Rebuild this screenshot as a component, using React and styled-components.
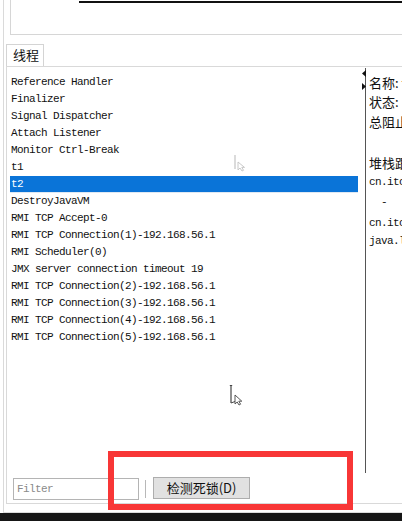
import React from "react";
import styled, { createGlobalStyle } from "styled-components";

const GlobalStyle = createGlobalStyle`
  html, body { margin: 0; padding: 0; background: #ffffff; overflow: hidden; }
  #root { width: 402px; height: 521px; }
`;

const MONO = `"Liberation Mono", "Noto Sans CJK SC", monospace`;
const CJK = `"Noto Sans CJK SC", "Liberation Sans", sans-serif`;

const Frame = styled.div`
  position: relative;
  width: 402px;
  height: 521px;
  display: flex;
  flex-direction: column;
  overflow: hidden;
  background: #ffffff;
`;

const Main = styled.div`
  flex: 0 0 513px;
  margin-left: 3px;
  border-left: 1px solid #dadada;
  border-bottom: 1px solid #dcdcdc;
  box-sizing: border-box;
  display: flex;
  flex-direction: column;
  overflow: hidden;
`;

const TopBox = styled.div`
  flex: 0 0 35px;
  margin-left: 6px;
  border-left: 1px solid #d6d6d6;
  border-bottom: 1px solid #d6d6d6;
  box-sizing: border-box;
  padding-top: 1px;
  display: flex;
`;

const TopRule = styled.div`
  margin-left: 68px;
  flex: 1;
  height: 2px;
  background: #111;
`;

const TabStrip = styled.div`
  margin-top: 9px;
  display: flex;
  padding-left: 2px;
  height: 22px;
`;

const Tab = styled.div`
  width: 38px;
  box-sizing: border-box;
  border: 1px solid #d4d4d4;
  border-bottom: none;
  background: #fff;
  font-family: ${CJK};
  font-size: 13px;
  line-height: 20px;
  padding-left: 6px;
  color: #111;
`;

const Panel = styled.div`
  margin-left: 2px;
  width: 420px;
  flex: 0 0 438px;
  box-sizing: border-box;
  border: 1px solid #d9d9d9;
  display: flex;
  flex-direction: column;
`;

const Split = styled.div`
  display: flex;
  flex: 0 0 406px;
`;

const ListPane = styled.div`
  flex: 0 0 351px;
  padding: 7px 0 0 3px;
  box-sizing: border-box;
  display: flex;
  flex-direction: column;
`;

const Row = styled.div`
  height: 17px;
  line-height: 17px;
  padding-left: 1px;
  font-family: ${MONO};
  font-size: 11px;
  letter-spacing: -0.6px;
  white-space: nowrap;
  color: ${(p) => (p.$selected ? "#ffffff" : "#111")};
  background: ${(p) => (p.$selected ? "#0a74d8" : "transparent")};
  border-bottom: ${(p) => (p.$selected ? "1px solid #dfe8f2" : "none")};
  box-sizing: border-box;
`;

const Splitter = styled.div`
  position: relative;
  flex: 0 0 8px;
  display: flex;
  justify-content: flex-end;
`;

const SplitLine = styled.div`
  width: 1px;
  margin-top: 1px;
  background: #555;
`;

const Arrow = styled.svg`
  position: absolute;
  left: 4px;
  top: ${(p) => p.$top}px;
`;

const InfoPane = styled.div`
  flex: 1;
  min-width: 0;
  padding: 6px 0 0 3px;
  display: flex;
  flex-direction: column;
  white-space: pre;
  color: #111;
  overflow: hidden;
`;

const InfoLine = styled.div`
  font-family: ${(p) => (p.$mono ? MONO : CJK)};
  font-size: ${(p) => (p.$mono ? "11px" : "13px")};
  letter-spacing: ${(p) => (p.$mono ? "-0.6px" : "0")};
  height: ${(p) => p.$h}px;
  line-height: ${(p) => p.$h}px;
`;

const BottomBar = styled.div`
  display: flex;
  align-items: center;
  padding-left: 6px;
  margin-top: 4px;
  height: 23px;
`;

const FilterBox = styled.div`
  width: 126px;
  height: 22px;
  box-sizing: border-box;
  border: 1px solid #b4b4b4;
  background: #fff;
  font-family: ${MONO};
  font-size: 11px;
  letter-spacing: -0.6px;
  color: #8a8a8a;
  line-height: 20px;
  padding-left: 3px;
`;

const Sep = styled.div`
  width: 1px;
  height: 18px;
  background: #b8b8b8;
  margin: 0 7px 0 6px;
`;

const DetectButton = styled.div`
  width: 97px;
  height: 22px;
  box-sizing: border-box;
  border: 1px solid #adadad;
  background: #e1e1e1;
  font-family: ${CJK};
  font-size: 13px;
  line-height: 20px;
  text-align: center;
  color: #111;
  margin-top: -2px;
`;

const BlackBar = styled.div`
  flex: 1;
  background: #161616;
`;

const RedBox = styled.div`
  position: absolute;
  left: 108px;
  top: 451px;
  width: 245px;
  height: 59px;
  box-sizing: border-box;
  border: 6px solid #f83636;
  pointer-events: none;
`;

const Cursor = styled.svg`
  position: absolute;
  left: ${(p) => p.$x}px;
  top: ${(p) => p.$y}px;
  opacity: ${(p) => p.$o};
`;

const threads = [
  "Reference Handler",
  "Finalizer",
  "Signal Dispatcher",
  "Attach Listener",
  "Monitor Ctrl-Break",
  "t1",
  "t2",
  "DestroyJavaVM",
  "RMI TCP Accept-0",
  "RMI TCP Connection(1)-192.168.56.1",
  "RMI Scheduler(0)",
  "JMX server connection timeout 19",
  "RMI TCP Connection(2)-192.168.56.1",
  "RMI TCP Connection(3)-192.168.56.1",
  "RMI TCP Connection(4)-192.168.56.1",
  "RMI TCP Connection(5)-192.168.56.1",
];

const info = [
  { t: "名称: t2", h: 19 },
  { t: "状态: BLOCKED", h: 20 },
  { t: "总阻止数: 1, 总等待数: 0", h: 20 },
  { t: " ", h: 20 },
  { t: "堆栈跟踪:", h: 21 },
  { t: "cn.itcast.DeadLock.run", h: 18, mono: true },
  { t: "  -      已锁定", h: 23, mono: true },
  { t: "cn.itcast.DeadLock.run", h: 18, mono: true },
  { t: "java.lang.Thread.run", h: 19, mono: true },
];

export default function App() {
  return (
    <Frame>
      <GlobalStyle />
      <Main>
        <TopBox>
          <TopRule />
        </TopBox>
        <TabStrip>
          <Tab>线程</Tab>
        </TabStrip>
        <Panel>
          <Split>
            <ListPane>
              {threads.map((t) => (
                <Row key={t} $selected={t === "t2"}>
                  {t}
                </Row>
              ))}
            </ListPane>
            <Splitter>
              <Arrow $top={3} width="4" height="7" viewBox="0 0 4 7">
                <path d="M4 0 L0 3.5 L4 7 Z" fill="#111" />
              </Arrow>
              <Arrow $top={16} width="4" height="7" viewBox="0 0 4 7">
                <path d="M0 0 L4 3.5 L0 7 Z" fill="#111" />
              </Arrow>
              <SplitLine />
            </Splitter>
            <InfoPane>
              {info.map((l, i) => (
                <InfoLine key={i} $mono={l.mono} $h={l.h}>
                  {l.t}
                </InfoLine>
              ))}
            </InfoPane>
          </Split>
          <BottomBar>
            <FilterBox>Filter</FilterBox>
            <Sep />
            <DetectButton>检测死锁(D)</DetectButton>
          </BottomBar>
        </Panel>
      </Main>
      <BlackBar />
      <Cursor $x={232} $y={154} $o={0.35} width="16" height="18" viewBox="0 0 16 18">
        <path d="M3 1 L3 15" stroke="#555" strokeWidth="1.2" fill="none" />
        <path d="M6 8 L6 16 L8 14 L10 17 L11.5 16.3 L9.8 13.4 L12.5 13.4 Z" fill="#fff" stroke="#555" strokeWidth="0.9" />
      </Cursor>
      <Cursor $x={227} $y={384} $o={0.9} width="18" height="22" viewBox="0 0 18 22">
        <path d="M4 1 L4 19" stroke="#333" strokeWidth="1.2" fill="none" />
        <path d="M2.8 1.5 L5.2 1.5" stroke="#333" strokeWidth="1" />
        <path d="M4 19 L8 17.5" stroke="#333" strokeWidth="1" />
        <path d="M8 11 L8 20 L10.2 18 L12 21 L13.6 20.2 L11.8 17.2 L14.8 17.2 Z" fill="#fff" stroke="#333" strokeWidth="0.9" />
      </Cursor>
      <RedBox />
    </Frame>
  );
}
